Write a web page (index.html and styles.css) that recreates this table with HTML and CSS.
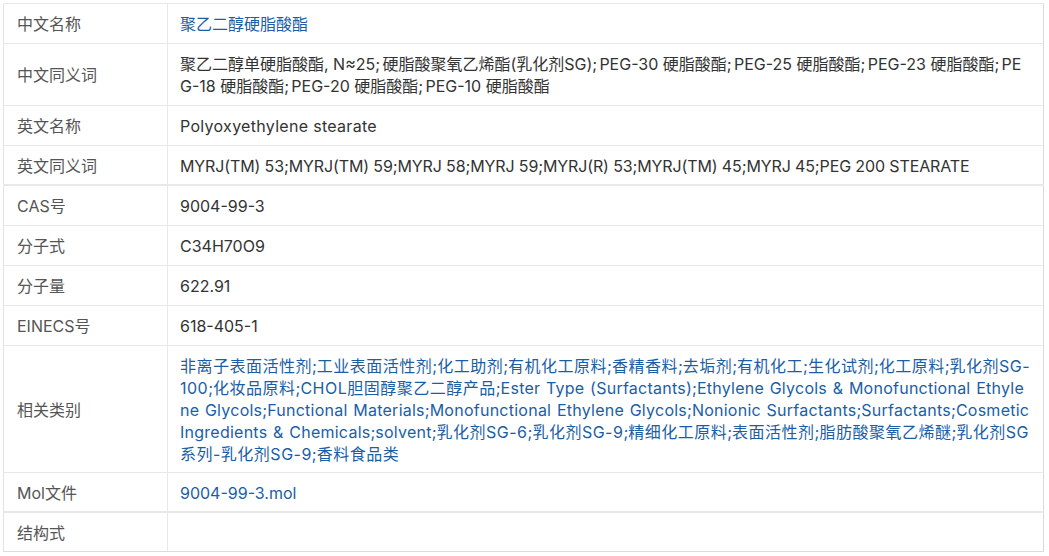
FILE: index.html
```html
<!DOCTYPE html>
<html lang="zh-CN">
<head>
<meta charset="utf-8">
<title>聚乙二醇硬脂酸酯</title>
<link rel="stylesheet" href="styles.css">
</head>
<body>
<div class="wrap">
<table class="info">
  <tr><td class="label">中文名称</td><td class="value"><a class="link">聚乙二醇硬脂酸酯</a></td></tr>
  <tr><td class="label">中文同义词</td><td class="value list"><span class="item">聚乙二醇单硬脂酸酯, N≈25</span>;<span class="item">硬脂酸聚氧乙烯酯(乳化剂SG)</span>;<span class="item">PEG-30 硬脂酸酯</span>;<span class="item">PEG-25 硬脂酸酯</span>;<span class="item">PEG-23 硬脂酸酯</span>;<span class="item">PEG-18 硬脂酸酯</span>;<span class="item">PEG-20 硬脂酸酯</span>;<span class="item">PEG-10 硬脂酸酯</span></td></tr>
  <tr><td class="label">英文名称</td><td class="value"><span class="en">Polyoxyethylene stearate</span></td></tr>
  <tr class="thick"><td class="label">英文同义词</td><td class="value"><span class="caps">MYRJ(TM) 53;MYRJ(TM) 59;MYRJ 58;MYRJ 59;MYRJ(R) 53;MYRJ(TM) 45;MYRJ 45;PEG 200 STEARATE</span></td></tr>
  <tr><td class="label">CAS号</td><td class="value">9004-99-3</td></tr>
  <tr><td class="label">分子式</td><td class="value">C34H70O9</td></tr>
  <tr><td class="label">分子量</td><td class="value">622.91</td></tr>
  <tr><td class="label">EINECS号</td><td class="value">618-405-1</td></tr>
  <tr class="multi"><td class="label">相关类别</td><td class="value cats"><a class="item zh">非离子表面活性剂</a>;<a class="item zh">工业表面活性剂</a>;<a class="item zh">化工助剂</a>;<a class="item zh">有机化工原料</a>;<a class="item zh">香精香料</a>;<a class="item zh">去垢剂</a>;<a class="item zh">有机化工</a>;<a class="item zh">生化试剂</a>;<a class="item zh">化工原料</a>;<a class="item zh">乳化剂SG-100</a>;<a class="item zh">化妆品原料</a>;<a class="item zh">CHOL胆固醇聚乙二醇产品</a>;<a class="item en">Ester Type (Surfactants)</a>;<a class="item en">Ethylene Glycols &amp; Monofunctional Ethylene Glycols</a>;<a class="item en">Functional Materials</a>;<a class="item en">Monofunctional Ethylene Glycols</a>;<a class="item en">Nonionic Surfactants</a>;<a class="item en">Surfactants</a>;<a class="item en">Cosmetic Ingredients &amp; Chemicals</a>;<a class="item en">solvent</a>;<a class="item zh">乳化剂SG-6</a>;<a class="item zh">乳化剂SG-9</a>;<a class="item zh">精细化工原料</a>;<a class="item zh">表面活性剂</a>;<a class="item zh">脂肪酸聚氧乙烯醚</a>;<a class="item zh">乳化剂SG系列-乳化剂SG-9</a>;<a class="item zh">香料食品类</a></td></tr>
  <tr class="thick"><td class="label">Mol文件</td><td class="value"><a class="link">9004-99-3.mol</a></td></tr>
  <tr class="last"><td class="label">结构式</td><td class="value"></td></tr>
</table>
</div>
</body>
</html>
```

FILE: styles.css
```css
html, body {
  margin: 0;
  padding: 0;
  background: #ffffff;
}
body {
  font-family: "Inter", "Noto Sans CJK SC", sans-serif;
  font-size: 16px;
  color: #333333;
}
.wrap {
  padding: 3px 0 0 3px;
}
.info {
  width: 1041px;
  border-collapse: collapse;
  table-layout: fixed;
  border-left: 1px solid #e3e3e3;
  border-right: 1px solid #d9d9d9;
}
.info td {
  border-top: 1px solid #e8e8e8;
  border-bottom: 1px solid #e8e8e8;
  padding: 9px 12px 8px 12px;
  line-height: 22px;
  vertical-align: middle;
  word-break: break-all;
}
.info .label {
  width: 138px;
  padding-left: 13px;
  color: #555555;
  border-right: 1px solid #e8e8e8;
}
.info .value {
  color: #333333;
}
.info tr.multi td {
  padding-bottom: 7px;
}
.info tr.thick td {
  border-bottom: 2px solid #e8e8e8;
  padding-bottom: 7px;
}
.info tr.last td {
  border-bottom: 1px solid #dcdcdc;
  padding-bottom: 7px;
}
.list .item + .item {
  margin-left: 2.3px;
}
.en {
  letter-spacing: 0.3px;
}
.caps {
  letter-spacing: -0.12px;
}
.info .cats {
  color: #1a5ea6;
}
.cats .item {
  color: #1a5ea6;
  text-decoration: none;
}
.cats .zh {
  letter-spacing: 0.5px;
}
.cats .en {
  letter-spacing: 0.25px;
  word-spacing: 0.9px;
}
.link {
  color: #1a5ea6;
  text-decoration: none;
}
```
